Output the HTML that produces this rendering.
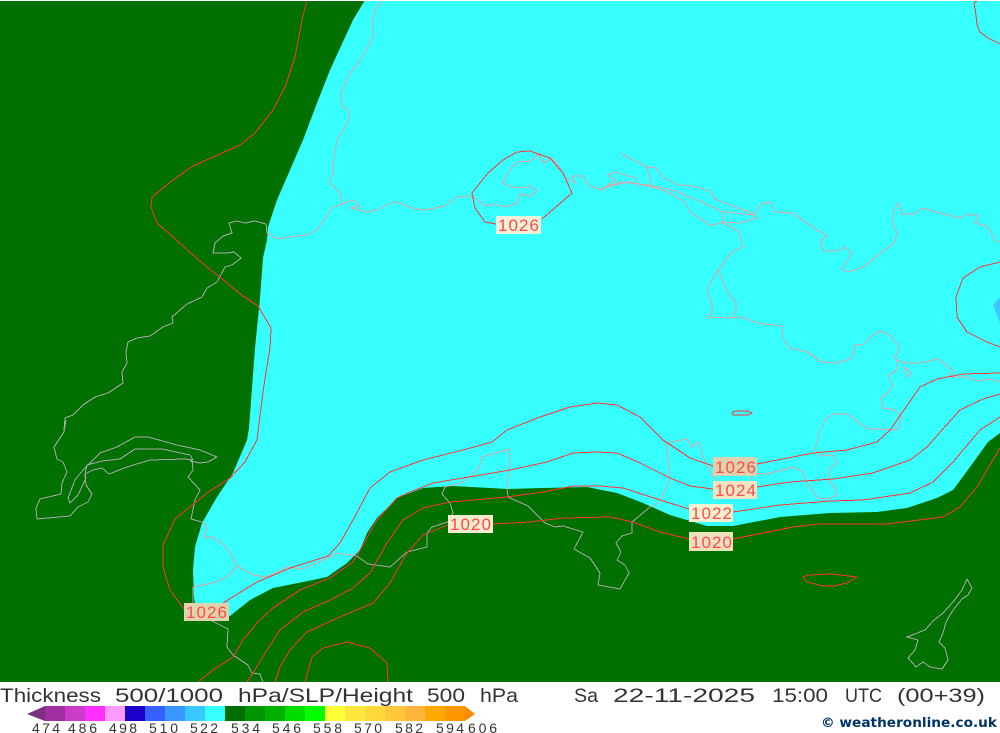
<!DOCTYPE html>
<html>
<head>
<meta charset="utf-8">
<title>Thickness 500/1000 hPa/SLP/Height 500 hPa</title>
<style>
html,body{margin:0;padding:0;background:#fff;width:1000px;height:733px;overflow:hidden}
svg{display:block;position:absolute;left:0;top:0}
.iso{fill:none;stroke:#ff3333;stroke-width:1;stroke-linejoin:round;shape-rendering:crispEdges}
.coast{fill:none;stroke-width:1;shape-rendering:crispEdges}
.l{font-family:"Liberation Sans",sans-serif;font-size:17px;fill:#ff4a4a}
.t{font-family:"Liberation Sans",sans-serif;font-size:19.5px;fill:#333}
.n{font-family:"Liberation Sans",sans-serif;font-size:14px;fill:#333}
</style>
</head>
<body>
<svg width="1000" height="733" viewBox="0 0 1000 733" xmlns="http://www.w3.org/2000/svg">
<defs>
<clipPath id="map"><rect x="0" y="1" width="1000" height="681"/></clipPath>
<clipPath id="cy"><path d="M365,0 L353,20 L330,70 L317,103 L303,140 L290,170 L277,200 L268,227 L267,240 L263,258 L260,298 L255,348 L252,388 L249,428 L247,440 L233,473 L217,497 L202,523 L195,547 L193,570 L194,597 L198,620 L230,616 L250,600 L273,588 L303,582 L327,577 L347,563 L360,550 L367,533 L377,518 L397,498 L423,488 L453,486 L490,488 L507,489 L543,488 L587,487 L617,493 L643,503 L670,515 L707,526 L733,526 L780,517 L830,513 L877,512 L907,508 L937,498 L953,490 L970,467 L988,442 L1000,433 L1000,0 Z"/></clipPath>
<g id="coast">
<path d="M64,430 L65,418 L73,415 L83,405 L95,397 L108,393 L117,387 L123,383 L122,372 L127,363 L126,352 L128,342 L137,338 L150,336 L163,327 L173,323 L172,317 L187,304 L202,297 L207,288 L217,282 L225,267 L232,265 L241,258 L234,252 L227,253 L213,253 L215,243 L223,236 L232,233 L229,223 L237,221 L245,223 L255,221 L266,224 L267,233 L278,239 L297,236 L307,235 L317,230 L332,208 L353,200 L360,206 L350,208 L367,212 L377,210 L393,202 L400,203 L412,208 L425,210 L440,207 L447,205 L457,197 L472,196 L485,206 L493,204 L507,207 L517,203 L520,194 L530,196 L537,191 L530,186 L522,188 L512,187 L502,183 L512,167 L518,162 L531,161 L538,154 L544,163 L552,158 L558,165 L565,177 L575,183 L572,176 L583,176 L588,185 L595,188 L603,190 L608,185 L615,180 L608,175 L615,172 L635,178 L639,185"/>
<path d="M383,0 L375,10 L372,23 L374,35 L362,58 L350,73 L341,93 L342,106 L349,110 L348,122 L337,140 L333,163 L333,173 L329,182 L340,193 L343,204"/>
<path d="M600,189 L620,182 L647,185 L673,190 L697,200 L723,212 L755,215"/>
<path d="M620,153 L647,167 L652,187 M647,167 L657,168 L662,177 L678,185 L693,186 L710,191 L715,199 L735,207 L750,212 L755,215 L757,218 L740,223 L723,222 L723,213"/>
<path d="M607,187 L627,182 L653,187 L670,193 L685,202 L690,212 L710,225 L723,223 L738,231 L743,247 L733,251 L718,270 L707,288 L713,310 L707,319 M718,270 L728,293 L736,302 L736,311 L730,318"/>
<path d="M755,215 L761,204 L771,202 L774,212 L793,213 L810,225 L827,236 L820,242 L824,251 L836,251 L844,247 L852,253 L842,269 L849,272 L863,267 L895,242 L897,232 L892,223 L894,210 L899,203 L902,214 L915,214 L922,208 L960,218 L968,214 L979,216 L975,223 L987,226 L995,240 L1000,242"/>
<path d="M707,317 L730,318 L742,317 L758,323 L782,326 L783,338 L790,348 L807,352 L822,362 L838,363 L852,358 L855,345 L865,344 L872,336 L880,331 L890,335 L900,348 L895,357 L897,360 L905,363 L920,363 L938,359 L953,370 L949,377 L967,377 L977,381 L990,379 L1000,382"/>
<path d="M897,360 L897,370 L888,375 L893,385 L888,393 L881,398 L883,408 L895,410 L901,417 L899,428 L893,430 L882,429 L868,429 L847,414 L833,414 L825,420 L820,430 L815,450 L820,456 L833,455 L837,463 L830,468 L828,480 L835,487 L837,495 L827,499 L818,498 L807,483 L803,472 L793,467 L767,474 L753,473 L750,483 L718,482 L712,475 L703,457 L699,442 L692,447 L687,439 L666,443 L670,478 L660,502 L650,507 L632,522"/>
<path d="M904,367 L912,373 L907,377 Z"/>
<path d="M632,522 L632,533 L622,536 L616,543 L621,552 L617,560 L625,565 L629,573 L620,589 L598,585 L600,573 L590,558 L574,549 L583,532 L563,526 L555,527 L545,523 L528,506 L508,497 L507,488 L510,460 L509,449 L482,457 L479,468 L463,482 L445,487 L442,494 L450,503 L453,513 L448,522 L432,527 L427,533 L427,547 L407,552 L390,567 L368,564 L357,556 L337,553 L328,558 L303,569 L287,567 L267,577 L253,575 L237,566 L230,553 L225,546 L213,537 L204,538 L207,527 L202,522 L191,519 L195,500 L200,490 L188,477 L193,470 L192,460 L185,459 L150,460 L127,467 L109,474 L102,468 L93,470 L85,474 L86,485 L92,494 L88,502 L78,507 L70,516 L37,519 L36,508 L40,499 L61,494 L62,483 L67,472 L63,462 L57,459 L54,447 L64,432 L66,420"/>
<path d="M237,566 L227,577 L213,583 L193,587 L193,607 L197,617 L210,620 L228,629 L227,647 L233,655 L248,665 L252,673 L260,674 L263,682"/>
<path d="M68,498 L75,480 L83,470 L100,453 L117,447 L135,437 L148,437 L177,445 L200,450 L217,457 L208,462 L200,463 L190,461 M68,498 L70,503 L78,495 L86,478 L85,474 L87,465 L102,461 L120,459 L135,449 L162,449 L190,455 L193,460"/>
<path d="M907,637 L925,630 L934,620 L943,613 L953,602 L962,590 L967,579 L972,588 L968,595 L962,599 L953,610 L946,622 L943,633 L939,642 L945,648 L948,660 L942,669 L930,667 L923,662 L916,667 L908,658 L915,650 L918,640 Z"/>
</g>
</defs>

<g clip-path="url(#map)">
<rect x="0" y="0" width="1000" height="683" fill="#007000"/>
<rect x="0" y="0" width="1000" height="683" fill="#38ffff" clip-path="url(#cy)"/>
<path d="M1000,297 L993,305 L1000,323 Z" fill="#44c4ff"/>
<use href="#coast" class="coast" stroke="#aaaaaa"/>
<use href="#coast" class="coast" stroke="#e2a0a4" clip-path="url(#cy)"/>

<path class="iso" d="M307,0 L302,20 L295,57 L285,87 L273,110 L255,133 L240,145 L213,157 L193,166 L173,180 L152,197 L151,207 L157,223 L173,237 L193,255 L208,268 L220,277 L240,294 L258,306 L271,328 L270,348 L265,378 L260,415 L257,440 L245,462 L230,478 L207,493 L175,519 L163,545 L163,567 L170,590 L184,609"/>
<path class="iso" d="M223,603 L257,582 L290,568 L328,556 L340,543 L353,520 L370,488 L390,472 L423,460 L463,450 L492,442 L507,430 L540,417 L570,407 L597,403 L617,405 L640,417 L663,440 L690,458 L713,466"/>
<path class="iso" d="M757,464 L813,453 L847,450 L877,442 L890,430 L920,387 L937,379 L963,374 L1000,373"/>
<path class="iso" d="M198,682 L213,670 L233,657 L243,640 L257,623 L273,608 L300,590 L330,578 L353,562 L360,550 L377,520 L397,498 L410,492 L433,483 L463,478 L510,470 L547,462 L573,453 L597,452 L617,453 L640,463 L670,478 L690,486 L713,489"/>
<path class="iso" d="M757,487 L790,482 L833,479 L873,473 L910,460 L927,447 L942,430 L960,410 L983,399 L1000,394"/>
<path class="iso" d="M247,682 L253,673 L267,650 L280,630 L303,612 L330,600 L353,588 L370,573 L387,543 L403,520 L423,508 L450,502 L463,501 L507,497 L543,492 L573,486 L600,486 L623,488 L657,499 L689,509"/>
<path class="iso" d="M733,512 L780,505 L830,501 L863,500 L910,493 L933,482 L953,462 L980,430 L1000,417"/>
<path class="iso" d="M275,682 L280,667 L290,650 L307,632 L333,620 L373,603 L390,583 L407,553 L423,535 L448,525"/>
<path class="iso" d="M493,524 L530,522 L563,518 L610,517 L633,522 L660,532 L689,539"/>
<path class="iso" d="M733,539 L793,527 L817,524 L887,524 L943,517 L960,507 L977,487 L1000,448"/>
<path class="iso" d="M305,682 L312,657 L323,648 L347,642 L370,648 L387,663 L388,682"/>
<path class="iso" d="M496,224 L485,222 L475,208 L472,193 L488,173 L503,160 L517,152 L530,151 L550,158 L563,173 L572,193 L542,219"/>
<path class="iso" d="M1000,262 L980,267 L963,278 L956,297 L957,317 L967,332 L987,342 L1000,347"/>
<path class="iso" d="M977,1 L974,3 L976,15 L977,25 L980,32 L988,38 L1000,44"/>
<path class="iso" d="M732,413 L735,411 L747,411 L752,413 L748,415 L733,415 Z"/>
<path class="iso" d="M803,577 L808,575 L832,574 L857,577 L847,583 L833,586 L823,586 L807,582 Z"/>

<rect x="496" y="216" width="45" height="18" fill="#f0f0d8"/>
<rect x="713" y="457" width="44" height="19" fill="#dfd0ae"/>
<rect x="713" y="481" width="44" height="18" fill="#efe5c0"/>
<rect x="689" y="504" width="44" height="18" fill="#f5f0d0"/>
<rect x="689" y="532" width="44" height="19" fill="#ece0bd"/>
<rect x="448" y="515" width="45" height="18" fill="#f5ecd0"/>
<rect x="184" y="603" width="45" height="18" fill="#dfd3ad"/>
<text class="l" x="498" y="231" textLength="41" lengthAdjust="spacing">1026</text>
<text class="l" x="715" y="473" textLength="41" lengthAdjust="spacing">1026</text>
<text class="l" x="715" y="496" textLength="41" lengthAdjust="spacing">1024</text>
<text class="l" x="691" y="519" textLength="41" lengthAdjust="spacing">1022</text>
<text class="l" x="691" y="548" textLength="41" lengthAdjust="spacing">1020</text>
<text class="l" x="450" y="530" textLength="41" lengthAdjust="spacing">1020</text>
<text class="l" x="186" y="618" textLength="41" lengthAdjust="spacing">1026</text>
</g>

<text class="t" x="0" y="702" textLength="101" lengthAdjust="spacingAndGlyphs">Thickness</text>
<text class="t" x="115" y="702" textLength="108" lengthAdjust="spacingAndGlyphs">500/1000</text>
<text class="t" x="238" y="702" textLength="175" lengthAdjust="spacingAndGlyphs">hPa/SLP/Height</text>
<text class="t" x="427" y="702" textLength="38" lengthAdjust="spacingAndGlyphs">500</text>
<text class="t" x="480" y="702" textLength="38" lengthAdjust="spacingAndGlyphs">hPa</text>
<text class="t" x="574" y="702" textLength="24" lengthAdjust="spacingAndGlyphs">Sa</text>
<text class="t" x="613" y="702" textLength="142" lengthAdjust="spacingAndGlyphs">22-11-2025</text>
<text class="t" x="772" y="702" textLength="56" lengthAdjust="spacingAndGlyphs">15:00</text>
<text class="t" x="845" y="702" textLength="37" lengthAdjust="spacingAndGlyphs">UTC</text>
<text class="t" x="897" y="702" textLength="88" lengthAdjust="spacingAndGlyphs">(00+39)</text>

<g shape-rendering="crispEdges">
<rect x="45" y="706" width="20" height="15" fill="#a030a0"/>
<rect x="65" y="706" width="20" height="15" fill="#c83cc8"/>
<rect x="85" y="706" width="20" height="15" fill="#ff30ff"/>
<rect x="105" y="706" width="20" height="15" fill="#ff99ff"/>
<rect x="125" y="706" width="20" height="15" fill="#1a00c8"/>
<rect x="145" y="706" width="20" height="15" fill="#3860ff"/>
<rect x="165" y="706" width="20" height="15" fill="#3898ff"/>
<rect x="185" y="706" width="20" height="15" fill="#38c8ff"/>
<rect x="205" y="706" width="20" height="15" fill="#38ffff"/>
<rect x="225" y="706" width="20" height="15" fill="#006f00"/>
<rect x="245" y="706" width="20" height="15" fill="#009600"/>
<rect x="265" y="706" width="20" height="15" fill="#00b000"/>
<rect x="285" y="706" width="20" height="15" fill="#00dc00"/>
<rect x="305" y="706" width="20" height="15" fill="#00ff00"/>
<rect x="325" y="706" width="20" height="15" fill="#ffff38"/>
<rect x="345" y="706" width="20" height="15" fill="#ffe63c"/>
<rect x="365" y="706" width="20" height="15" fill="#ffd83c"/>
<rect x="385" y="706" width="20" height="15" fill="#ffc83c"/>
<rect x="405" y="706" width="20" height="15" fill="#ffb43c"/>
<rect x="425" y="706" width="20" height="15" fill="#ffa800"/>
<rect x="445" y="706" width="20" height="15" fill="#ff9600"/>
</g>
<path d="M45,706 L27,714 L45,721 Z" fill="#7c3080"/>
<path d="M465,706 L475,714 L465,721 Z" fill="#ff8c00"/>

<text class="n" x="32" y="733" textLength="28" lengthAdjust="spacing">474</text>
<text class="n" x="68" y="733" textLength="29" lengthAdjust="spacing">486</text>
<text class="n" x="109" y="733" textLength="28" lengthAdjust="spacing">498</text>
<text class="n" x="149" y="733" textLength="29" lengthAdjust="spacing">510</text>
<text class="n" x="190" y="733" textLength="28" lengthAdjust="spacing">522</text>
<text class="n" x="231" y="733" textLength="29" lengthAdjust="spacing">534</text>
<text class="n" x="272" y="733" textLength="29" lengthAdjust="spacing">546</text>
<text class="n" x="313" y="733" textLength="29" lengthAdjust="spacing">558</text>
<text class="n" x="354" y="733" textLength="28" lengthAdjust="spacing">570</text>
<text class="n" x="395" y="733" textLength="28" lengthAdjust="spacing">582</text>
<text class="n" x="436" y="733" textLength="28" lengthAdjust="spacing">594</text>
<text class="n" x="468" y="733" textLength="29" lengthAdjust="spacing">606</text>

<text x="821" y="727" font-family="'DejaVu Sans','Liberation Sans',sans-serif" font-weight="bold" font-size="13" fill="#003366" textLength="176" lengthAdjust="spacingAndGlyphs">© weatheronline.co.uk</text>
</svg>
</body>
</html>
